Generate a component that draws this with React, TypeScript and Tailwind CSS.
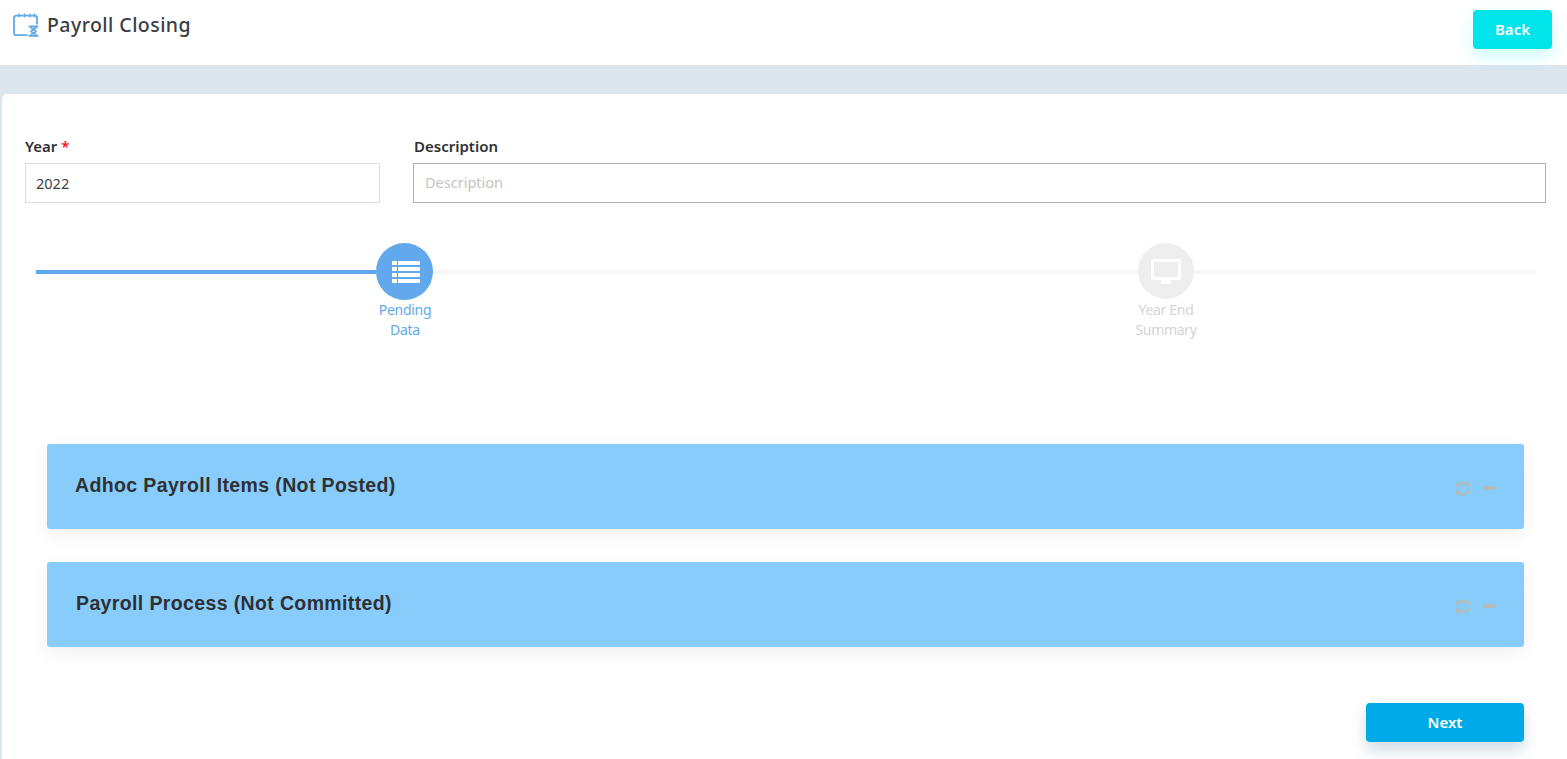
function CalendarHourglass() {
  return (
    <svg width="26" height="24" viewBox="0 0 26 24" fill="none" stroke="#62a8ec" strokeWidth="1.8" strokeLinecap="round" strokeLinejoin="round">
      <path d="M14 22.200H3.200a2.200 2.200 0 0 1-2.200-2.200V4.800a2.200 2.200 0 0 1 2.200-2.200h18.600A2.200 2.200 0 0 1 24 4.800v6" />
      <path d="M6 1v2.800M11.500 1v2.800M17 1v2.800M21.500 1v2.800" strokeWidth="1.500" />
      <path d="M16.500 13.500h8M16.500 22.800h8" strokeWidth="2" />
      <path d="M18 14c0 2.800 5 2.800 5 4.300s-5 1.500-5 4.200M23 14c0 2.800-5 2.800-5 4.300s5 1.500 5 4.200" strokeWidth="1.700" />
    </svg>
  );
}

function ListIcon() {
  return (
    <svg width="28" height="22" viewBox="0 0 28 22" fill="#ffffff">
      <rect x="0" y="0" width="5" height="4" />
      <rect x="6" y="0" width="22" height="4" />
      <rect x="0" y="6" width="5" height="4" />
      <rect x="6" y="6" width="22" height="4" />
      <rect x="0" y="12" width="5" height="4" />
      <rect x="6" y="12" width="22" height="4" />
      <rect x="0" y="18" width="5" height="4" />
      <rect x="6" y="18" width="22" height="4" />
    </svg>
  );
}

function DesktopIcon() {
  return (
    <svg width="30" height="25" viewBox="0 0 30 25" fill="#ffffff">
      <path d="M2 0h26a2 2 0 0 1 2 2v17a2 2 0 0 1-2 2H2a2 2 0 0 1-2-2V2a2 2 0 0 1 2-2zm1 3v15h24V3z" fillRule="evenodd" />
      <rect x="10" y="21" width="10" height="4" />
    </svg>
  );
}

function RefreshIcon() {
  return (
    <svg width="15" height="15" viewBox="0 0 15 15" fill="none" stroke="#b6bab8" strokeWidth="2.200">
      <path d="M1.500 6.500A6 6 0 0 1 11.800 3.500" />
      <path d="M13.500 8.500A6 6 0 0 1 3.200 11.500" />
      <path d="M14 .5v5H9zM1 14.500v-5h5z" fill="#b6bab8" stroke="none" />
    </svg>
  );
}

function Panel({ title, left }: { title: string; left: string }) {
  return (
    <div className="flex h-[85px] items-center justify-between rounded-[3px] bg-[#87ccfa] pr-[28px] shadow-[0_6px_20px_rgba(0,0,0,0.06)]">
      <h3 className={`${left} pb-[2px] font-['Liberation_Sans',sans-serif] text-[19.500px] font-bold tracking-[0.37px] text-[#2f3033]`}>
        {title}
      </h3>
      <div className="flex items-center gap-[13px] pt-[4px]">
        <RefreshIcon />
        <div className="mb-[2px] h-[4px] w-[13px] rounded-[1px] bg-[#b6bab8]" />
      </div>
    </div>
  );
}

export default function App() {
  return (
    <div className="flex h-[759px] flex-col overflow-hidden bg-[#dce6ee] font-['Noto_Sans',sans-serif]">
      {/* Header */}
      <header className="flex h-[66px] shrink-0 items-start justify-between border-b border-[#e0e6eb] bg-white pl-[13px] pr-[15px]">
        <div className="flex items-center gap-[8px] pt-[11px]">
          <CalendarHourglass />
          <h1 className="text-[19.5px] font-medium leading-[28px] tracking-[0.45px] text-[#3a3d42]">Payroll Closing</h1>
        </div>
        <button className="mt-[10px] h-[39px] w-[79px] rounded-[4px] bg-[#00e5ea] text-[15px] font-semibold text-white shadow-[0_8px_16px_rgba(0,229,234,0.2)]">
          Back
        </button>
      </header>

      {/* Card */}
      <main className="mt-[28px] ml-[2px] flex-1 rounded-tl-[5px] bg-white">
        <div className="flex gap-[33px] pl-[23px] pr-[21px] pt-[42px]">
          <div className="w-[355px]">
            <label className="block text-[15px] font-semibold leading-[20px] text-[#2f3033]">
              Year <span className="text-[#f01818]">*</span>
            </label>
            <input
              readOnly
              value="2022"
              className="mt-[7px] h-[40px] w-full border border-[#dcdce8] px-[10px] text-[14.500px] text-[#3f4246] outline-none"
            />
          </div>
          <div className="flex-1">
            <label className="block pl-[1px] text-[15px] font-semibold leading-[20px] text-[#2f3033]">Description</label>
            <input
              readOnly
              placeholder="Description"
              className="mt-[7px] h-[40px] w-full border border-[#b0b0b0] px-[11px] pb-[2px] text-[14.500px] text-[#3f4246] outline-none placeholder:text-[#c4c4c4]"
            />
          </div>
        </div>

        {/* Stepper */}
        <div className="ml-[34px] mt-[40px] flex w-[1500px] items-start">
          <div className="mt-[27px] h-[4px] w-[323px] bg-[#62a8ec]" />
          <div className="flex w-[90px] flex-col items-center">
            <div className="flex w-full items-start">
              <div className="mt-[27px] h-[4px] flex-1 bg-[#62a8ec]" />
              <div className="flex h-[57px] w-[57px] items-center rounded-full bg-[#62a8ec] pl-[16px]">
                <ListIcon />
              </div>
              <div className="mt-[27px] h-[4px] flex-1 bg-[#f6f6f6]" />
            </div>
            <div className="pl-[2px] text-center text-[14px] leading-[20px] tracking-[-0.3px] text-[#62a8ec]">
              Pending
              <br />
              Data
            </div>
          </div>
          <div className="mt-[27px] h-[4px] w-[672px] bg-[#f6f6f6]" />
          <div className="flex w-[90px] flex-col items-center">
            <div className="flex w-full items-start">
              <div className="mt-[27px] h-[4px] flex-1 bg-[#f6f6f6]" />
              <div className="flex h-[56px] w-[56px] items-center justify-center rounded-full bg-[#eeeeee]">
                <DesktopIcon />
              </div>
              <div className="mt-[27px] h-[4px] flex-1 bg-[#f6f6f6]" />
            </div>
            <div className="mt-[1px] text-center text-[14px] leading-[20px] tracking-[-0.3px] text-[#d4d4d4]">
              Year End
              <br />
              Summary
            </div>
          </div>
          <div className="mt-[27px] h-[4px] flex-1 bg-[#f6f6f6]" />
        </div>

        {/* Panels */}
        <div className="ml-[45px] mt-[104px] flex w-[1477px] flex-col gap-[33px]">
          <Panel title="Adhoc Payroll Items (Not Posted)" left="pl-[28px]" />
          <Panel title="Payroll Process (Not Committed)" left="pl-[29px]" />
        </div>

        <div className="ml-[45px] mt-[56px] flex w-[1477px] justify-end">
          <button className="h-[39px] w-[158px] rounded-[4px] bg-[#00a9e8] text-[15px] font-semibold text-white shadow-[0_8px_16px_rgba(0,80,120,0.2)]">
            Next
          </button>
        </div>
      </main>
    </div>
  );
}
